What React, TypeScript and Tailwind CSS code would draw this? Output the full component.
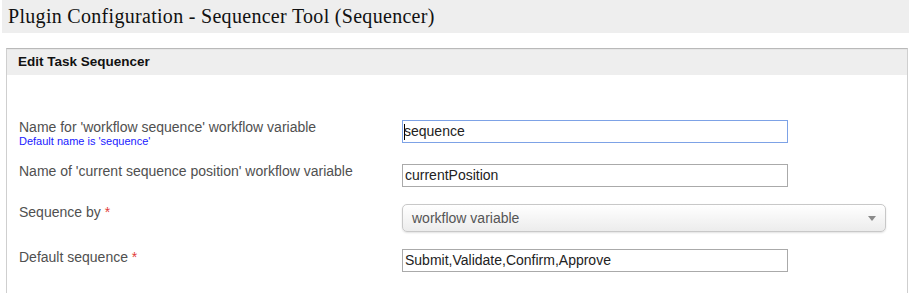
export default function App() {
  return (
    <div className="w-[909px] h-[293px] bg-white overflow-hidden font-['Liberation_Sans',Arial,sans-serif]">
      {/* Page title */}
      <div className="ml-[2px] h-[33px] bg-[#eeeeee] pl-[6px] flex items-center">
        <h1 className="font-['Liberation_Serif',Georgia,serif] text-[20px] tracking-[0.3px] leading-none text-[#111] pb-[2px]">
          Plugin Configuration - Sequencer Tool (Sequencer)
        </h1>
      </div>

      {/* Panel */}
      <div className="mt-[15px] ml-[6px] mr-[1px] border-l border-r border-[#cfcfcf] border-t border-t-[#b9b9b9] h-[260px]">
        <div className="h-[26px] bg-[#eeeeee] flex items-center pl-[11px] border-t border-[#e6e6e6]">
          <span className="text-[13.5px] font-bold text-[#111]">Edit Task Sequencer</span>
        </div>

        <div className="pl-[12px] pt-[45px]">
          <div className="flex items-start h-[44px]">
            <div className="w-[383px] -mt-[1px]">
              <div className="text-[14px] leading-[16px] text-[#505050]">Name for 'workflow sequence' workflow variable</div>
              <div className="text-[11px] leading-[12px] text-[#1a1aff]">Default name is 'sequence'</div>
            </div>
            <div className="w-[386px] h-[23px] border border-[#7da2e6] flex items-center pl-[1px] text-[14px] text-[#222]">
              <span className="w-px h-[16px] bg-black" />
              <span className="-ml-px">sequence</span>
            </div>
          </div>

          <div className="flex items-start h-[40px]">
            <div className="w-[383px] -mt-[1px] text-[14px] leading-[16px] text-[#505050]">
              Name of 'current sequence position' workflow variable
            </div>
            <div className="w-[386px] h-[23px] border border-[#aaaaaa] flex items-center pl-[2px] text-[14px] text-[#222]">
              currentPosition
            </div>
          </div>

          <div className="flex items-start h-[45px]">
            <div className="w-[383px] text-[14px] leading-[16px] text-[#505050]">
              Sequence by <span className="text-[#e23b3b]">*</span>
            </div>
            <div className="w-[484px] h-[28px] rounded-[5px] border border-[#c8c8c8] bg-gradient-to-b from-white to-[#ececec] shadow-[0_1px_2px_rgba(0,0,0,0.12)] flex items-center justify-between pl-[9px] pr-[9px]">
              <span className="text-[14px] text-[#555]">workflow variable</span>
              <svg width="8" height="5" viewBox="0 0 8 5">
                <path d="M0 0 L8 0 L4 5 Z" fill="#8a8a8a" />
              </svg>
            </div>
          </div>

          <div className="flex items-start">
            <div className="w-[383px] text-[14px] leading-[16px] text-[#505050]">
              Default sequence <span className="text-[#e23b3b]">*</span>
            </div>
            <div className="w-[386px] h-[23px] border border-[#aaaaaa] flex items-center pl-[2px] text-[14px] text-[#222]">
              Submit,Validate,Confirm,Approve
            </div>
          </div>
        </div>
      </div>
    </div>
  );
}
